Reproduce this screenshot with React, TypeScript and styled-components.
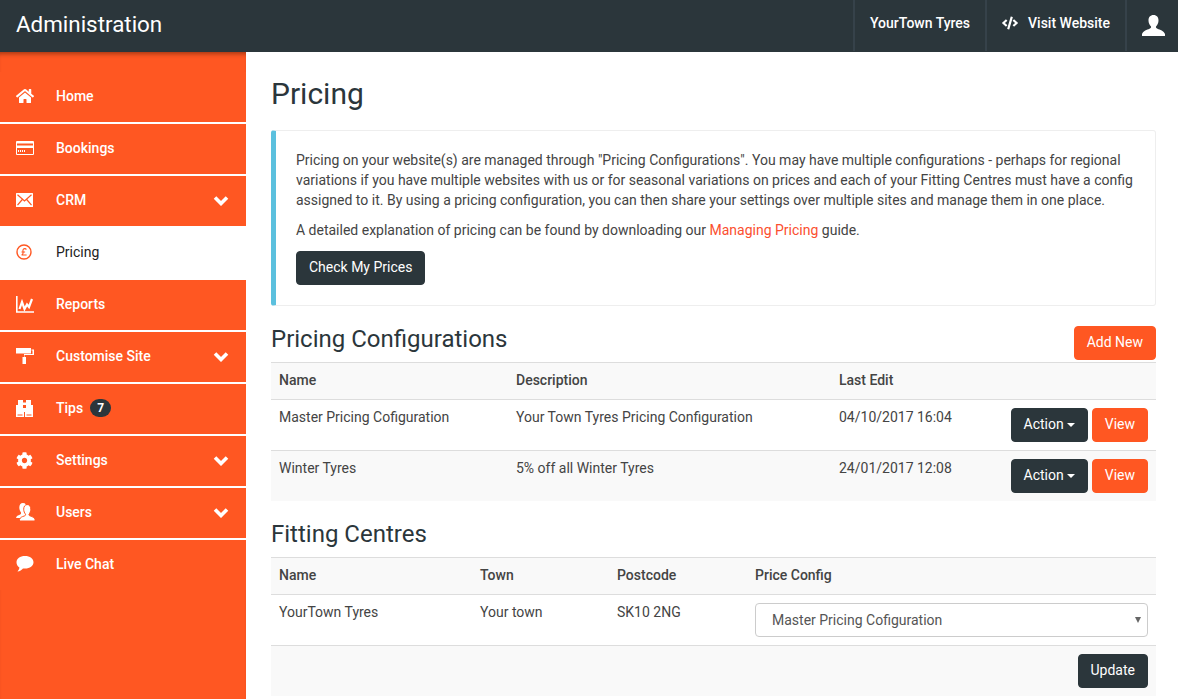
import React from "react";
import styled, { createGlobalStyle } from "styled-components";
import { FaHome, FaCog, FaCode } from "react-icons/fa";

const Global = createGlobalStyle`
  html, body { margin: 0; padding: 0; height: 100%; overflow: hidden; background: #fff; }
  body { font-family: Roboto, "Liberation Sans", sans-serif; font-size: 14px; line-height: 20px; color: #333; }
  * { box-sizing: border-box; }
`;

const Page = styled.div`
  display: grid;
  grid-template-rows: 52px 1fr;
  height: 699px;
  overflow: hidden;
`;
const TopBar = styled.header`
  display: flex;
  align-items: stretch;
  background: #2b363b;
  color: #fff;
`;
const Brand = styled.div`
  flex: 1;
  padding: 0 16px;
  font-size: 22.4px;
  line-height: 49px;
`;
const TopItem = styled.a`
  display: flex;
  align-items: center;
  gap: 10px;
  height: 51px;
  padding: 0 15px 5px 15px;
  border-left: 2px solid #36424a;
  font-weight: 500;
  color: #fff;
`;
const TopUser = styled(TopItem)`
  padding: 0 13px 0 15px;
  gap: 0;
  width: 53px;
`;
const Body = styled.div`
  display: grid;
  grid-template-columns: 246px 1fr;
  min-height: 0;
`;
const Sidebar = styled.nav`
  display: flex;
  flex-direction: column;
  gap: 2px;
  padding-top: 20px;
  background: #ff5722;
  box-shadow: inset 0 5px 4px -3px rgba(60, 20, 0, 0.45);
`;
const NavItem = styled.a<{ $active?: boolean; $last?: boolean }>`
  display: flex;
  align-items: center;
  height: ${(p) => (p.$active ? "54px" : "50px")};
  margin: ${(p) => (p.$active ? "-2px 0" : "0")};
  padding: 0 17px 2px 16px;
  background: ${(p) => (p.$active ? "#fff" : "#ff5722")};
  box-shadow: ${(p) => (p.$last || p.$active ? "none" : "0 2px 0 #fff")};
  color: ${(p) => (p.$active ? "#222" : "#fff")};
  font-weight: ${(p) => (p.$active ? 400 : 500)};
`;
const NavIcon = styled.span`
  display: flex;
  align-items: center;
  width: 40px;
  flex: none;
  svg { display: block; }
`;
const NavLabel = styled.span`
  flex: 1;
  display: flex;
  align-items: center;
`;
const Badge = styled.span`
  display: inline-block;
  width: 21px;
  height: 18px;
  margin-left: 7px;
  border-radius: 9px;
  background: #2b363b;
  color: #fff;
  font-size: 12px;
  font-weight: 700;
  line-height: 18px;
  text-align: center;
`;
const Main = styled.main`
  padding: 0 22px 0 25px;
  min-width: 0;
`;
const Title = styled.h1`
  margin: 22px 0 16px;
  font-size: 30px;
  font-weight: 400;
  line-height: 40px;
  color: #2b363b;
`;
const Callout = styled.section`
  height: 176px;
  padding: 19px 20px 20px 20px;
  border: 1px solid #eee;
  border-left: 5px solid #5bc0de;
  border-radius: 3px;
  color: #444;
`;
const Para = styled.p`
  margin: 0 0 10px;
`;
const TextLink = styled.a`
  color: #fb4f2f;
`;
const Btn = styled.button<{ $tone: "dark" | "orange" }>`
  display: inline-block;
  height: 34px;
  padding: 5px 12px 7px;
  border: 1px solid ${(p) => (p.$tone === "dark" ? "#2b363b" : "#ff5722")};
  border-radius: 4px;
  background: ${(p) => (p.$tone === "dark" ? "#2b363b" : "#ff5722")};
  color: #fff;
  font-family: Roboto, "Liberation Sans", sans-serif;
  font-size: 14px;
  line-height: 20px;
  white-space: nowrap;
`;
const CheckBtn = styled(Btn)`
  margin-top: 1px;
`;
const Caret = styled.span`
  display: inline-block;
  margin-left: 3px;
  vertical-align: middle;
  border-top: 4px solid #fff;
  border-left: 4px solid transparent;
  border-right: 4px solid transparent;
`;
const SectionHead = styled.div`
  display: flex;
  justify-content: space-between;
  align-items: flex-start;
  height: 36px;
  margin-top: 20px;
`;
const SectionTitle = styled.h2`
  margin: 0;
  font-size: 24px;
  font-weight: 400;
  line-height: 26px;
  color: #2b363b;
`;
const Table = styled.table`
  width: 100%;
  border-collapse: separate;
  border-spacing: 0;
  table-layout: fixed;
  color: #444;
  tbody tr:last-child td {
    height: 50px;
    border-bottom: 0;
  }
`;
const Th = styled.th<{ $w?: number }>`
  width: ${(p) => (p.$w ? `${p.$w}px` : "auto")};
  height: 38px;
  padding: 7px 8px;
  vertical-align: top;
  background: #f9f9f9;
  border-top: 1px solid #ddd;
  border-bottom: 1px solid #ddd;
  text-align: left;
  font-weight: 500;
`;
const Td = styled.td<{ $striped?: boolean; $right?: boolean }>`
  height: 51px;
  padding: 8px;
  vertical-align: top;
  background: ${(p) => (p.$striped ? "#f9f9f9" : "#fff")};
  border-bottom: 1px solid #ddd;
  text-align: ${(p) => (p.$right ? "right" : "left")};
`;
const TopTd = styled(Td)`
  padding-top: 7px;
`;
const Actions = styled.div`
  display: flex;
  justify-content: flex-end;
  gap: 4px;
`;
const SelectWrap = styled.div`
  position: relative;
`;
const Select = styled.select`
  display: block;
  width: 100%;
  height: 34px;
  padding: 6px 24px 6px 16px;
  border: 1px solid #ccc;
  border-radius: 4px;
  background: #fff;
  color: #555;
  font-family: Roboto, "Liberation Sans", sans-serif;
  font-size: 14px;
  appearance: none;
`;
const SelectArrow = styled.span`
  position: absolute;
  top: 14px;
  right: 7px;
  border-top: 6px solid #666;
  border-left: 3px solid transparent;
  border-right: 3px solid transparent;
  pointer-events: none;
`;

const Chevron = () => (
  <svg width="16" height="11" viewBox="0 0 16 11" fill="none" stroke="#fff" strokeWidth="3.6">
    <path d="M2 2.500 8 8.500 14 2.500" />
  </svg>
);
const CardIcon = () => (
  <svg width="18" height="14" viewBox="0 0 18 14" fill="#fff">
    <path fillRule="evenodd" d="M1 0h16a1 1 0 0 1 1 1v12a1 1 0 0 1-1 1H1a1 1 0 0 1-1-1V1a1 1 0 0 1 1-1zM1 2.500v2h16v-2zM1 7v6h16V7zM2 9h1v2H2zM4 9h1v2H4zM6 9h1v2H6zM8 9h1v2H8z" />
  </svg>
);
const MailIcon = () => (
  <svg width="17" height="14" viewBox="0 0 17 14">
    <rect width="17" height="14" rx="0.500" fill="#fff" />
    <path d="M1.500 1.800 8.500 8l7-6.200M1.500 12.200 6.300 6.500M15.500 12.200 10.700 6.500" fill="none" stroke="#ff5722" strokeWidth="1.200" />
  </svg>
);
const PoundIcon = () => (
  <svg width="16" height="16" viewBox="0 0 16 16" fill="none" stroke="#ff5722">
    <circle cx="8" cy="8" r="7" strokeWidth="1.400" />
    <path d="M10.300 5.600C10 4.400 7.500 4.100 7 5.800c-.3 1.200.3 2.300 0 3.500-.2.900-.7 1.400-1.400 1.700h5M5.500 8h3.600" strokeWidth="1.100" />
  </svg>
);
const ChartIcon = () => (
  <svg width="18" height="17" viewBox="0 0 18 17" fill="none" stroke="#fff">
    <path d="M.8 0v16H18" strokeWidth="1.600" />
    <path d="M3.500 13 6 6l2.500 7L11 8.500l2 2.500 3-8" strokeWidth="2.200" />
  </svg>
);
const RollerIcon = () => (
  <svg width="18" height="16" viewBox="0 0 18 16" fill="#fff">
    <path d="M0 0h15v5.500H0zM15.500 1.500H18v5.500H8.500v2H10v7H6.500V9H8V6h8.500V2.500h-1z" />
  </svg>
);
const BinocularsIcon = () => (
  <svg width="17" height="17" viewBox="0 0 17 17" fill="#fff">
    <path fillRule="evenodd" d="M2 0h5v2.500h3V0h5v5h2v12H9V12H8v5H0V5h2zM1.500 14.500v1h5v-1zM10.500 14.500v1h5v-1zM7 5v3h3V5z" />
  </svg>
);
const UsersIcon = () => (
  <svg width="19" height="18" viewBox="0 0 19 18">
    <path d="M7 0c2.500 0 3.500 2 3.500 4.500 0 2-.8 3.700-1.700 4.700-.2.900.3 1.500 1.200 1.800L8 15H0c.3-2 2.200-2.700 3.700-3.300 1-.4 1.500-1 1.300-2.300C4.100 8.300 3.300 6.500 3.300 4.500 3.300 2 4.500 0 7 0z" fill="#fff" />
    <path d="M11 1.500c2.600 0 3.800 2.200 3.800 4.700 0 2-.8 3.900-1.800 5 -.2 1 .3 1.500 1.500 1.900 1.800.6 3.800 1.200 4.500 3.400v1.500H3.500v-1.500c.7-2.200 2.700-2.800 4.500-3.400 1.200-.4 1.700-.9 1.500-1.900-1-1.100-1.800-3-1.800-5 0-2.500 1.200-4.700 3.800-4.700z" fill="#fff" stroke="#ff5722" strokeWidth="1" />
  </svg>
);
const ChatIcon = () => (
  <svg width="18" height="16" viewBox="0 0 18 16" fill="#fff">
    <path d="M9 0c5 0 8.500 2.700 8.500 6.300S14 12.600 9 12.600c-.7 0-1.300 0-2-.1C5.800 14 3.800 15.300 1.500 15.500c1-1 1.700-2.200 1.900-3.900C1.500 10.500.5 8.500.5 6.300.5 2.700 4 0 9 0z" />
  </svg>
);
const UserIcon = () => (
  <svg width="23" height="21" viewBox="0 0 23 21" fill="#fff">
    <path d="M11.500 0c3.300 0 5 2.300 5 5.500 0 2.300-1 4.500-2.500 6-.3 1 .2 1.700 1.500 2.200 2.500 1 6.300 2 7.500 5.300v2H0v-2c1.200-3.300 5-4.300 7.500-5.300 1.300-.5 1.800-1.200 1.500-2.200-1.500-1.500-2.500-3.700-2.500-6C6.500 2.300 8.200 0 11.500 0z" />
  </svg>
);

const navItems = [
  { label: "Home", icon: <FaHome size={18} /> },
  { label: "Bookings", icon: <CardIcon /> },
  { label: "CRM", icon: <MailIcon />, chevron: true },
  { label: "Pricing", icon: <PoundIcon />, active: true },
  { label: "Reports", icon: <ChartIcon /> },
  { label: "Customise Site", icon: <RollerIcon />, chevron: true },
  { label: "Tips", icon: <BinocularsIcon />, badge: "7" },
  { label: "Settings", icon: <FaCog size={17} />, chevron: true },
  { label: "Users", icon: <UsersIcon />, chevron: true },
  { label: "Live Chat", icon: <ChatIcon />, last: true },
];

const configs = [
  { name: "Master Pricing Cofiguration", desc: "Your Town Tyres Pricing Configuration", edit: "04/10/2017 16:04" },
  { name: "Winter Tyres", desc: "5% off all Winter Tyres", edit: "24/01/2017 12:08", striped: true },
];

export default function App() {
  return (
    <Page>
      <Global />
      <TopBar>
        <Brand>Administration</Brand>
        <TopItem>YourTown Tyres</TopItem>
        <TopItem><FaCode size={16} />Visit Website</TopItem>
        <TopUser><UserIcon /></TopUser>
      </TopBar>
      <Body>
        <Sidebar>
          {navItems.map((n) => (
            <NavItem key={n.label} $active={n.active} $last={n.last}>
              <NavIcon>{n.icon}</NavIcon>
              <NavLabel>
                {n.label}
                {n.badge && <Badge>{n.badge}</Badge>}
              </NavLabel>
              {n.chevron && <Chevron />}
            </NavItem>
          ))}
        </Sidebar>
        <Main>
          <Title>Pricing</Title>
          <Callout>
            <Para>
              Pricing on your website(s) are managed through "Pricing Configurations". You may have multiple configurations - perhaps for regional variations if you have multiple websites with us or for seasonal variations on prices and each of your Fitting Centres must have a config assigned to it. By using a pricing configuration, you can then share your settings over multiple sites and manage them in one place.
            </Para>
            <Para>
              A detailed explanation of pricing can be found by downloading our <TextLink>Managing Pricing</TextLink> guide.
            </Para>
            <CheckBtn $tone="dark">Check My Prices</CheckBtn>
          </Callout>
          <SectionHead>
            <SectionTitle>Pricing Configurations</SectionTitle>
            <Btn $tone="orange">Add New</Btn>
          </SectionHead>
          <Table>
            <thead>
              <tr>
                <Th $w={237}>Name</Th>
                <Th $w={323}>Description</Th>
                <Th $w={172}>Last Edit</Th>
                <Th />
              </tr>
            </thead>
            <tbody>
              {configs.map((c) => (
                <tr key={c.name}>
                  <TopTd $striped={c.striped}>{c.name}</TopTd>
                  <TopTd $striped={c.striped}>{c.desc}</TopTd>
                  <TopTd $striped={c.striped}>{c.edit}</TopTd>
                  <Td $striped={c.striped} $right>
                    <Actions>
                      <Btn $tone="dark">Action<Caret /></Btn>
                      <Btn $tone="orange">View</Btn>
                    </Actions>
                  </Td>
                </tr>
              ))}
            </tbody>
          </Table>
          <SectionHead>
            <SectionTitle>Fitting Centres</SectionTitle>
          </SectionHead>
          <Table>
            <thead>
              <tr>
                <Th $w={201}>Name</Th>
                <Th $w={137}>Town</Th>
                <Th $w={138}>Postcode</Th>
                <Th>Price Config</Th>
              </tr>
            </thead>
            <tbody>
              <tr>
                <TopTd>YourTown Tyres</TopTd>
                <TopTd>Your town</TopTd>
                <TopTd>SK10 2NG</TopTd>
                <Td>
                  <SelectWrap>
                    <Select defaultValue="master">
                      <option value="master">Master Pricing Cofiguration</option>
                      <option value="winter">Winter Tyres</option>
                    </Select>
                    <SelectArrow />
                  </SelectWrap>
                </Td>
              </tr>
              <tr>
                <Td $striped colSpan={4} $right>
                  <Btn $tone="dark">Update</Btn>
                </Td>
              </tr>
            </tbody>
          </Table>
        </Main>
      </Body>
    </Page>
  );
}
